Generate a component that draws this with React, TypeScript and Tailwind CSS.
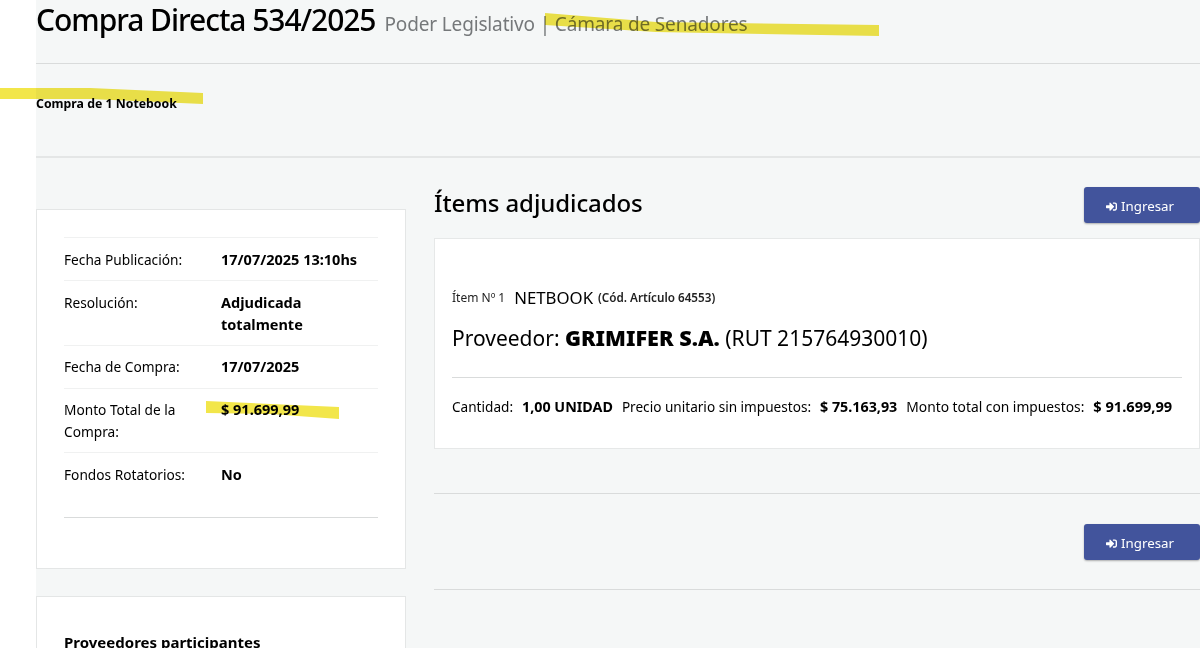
import React from 'react'
import { FaSignInAlt } from 'react-icons/fa'

const font = "font-['Noto_Sans',sans-serif]"

const rows = [
  { label: 'Fecha Publicación:', value: '17/07/2025 13:10hs', cls: 'h-[43px] pt-[11px]' },
  { label: 'Resolución:', value: 'Adjudicada totalmente', cls: 'h-[65px] pt-[11px]' },
  { label: 'Fecha de Compra:', value: '17/07/2025', cls: 'h-[43px] pt-[10px]' },
  { label: 'Monto Total de la Compra:', value: '$ 91.699,99', cls: 'h-[64px] pt-[10px]' },
  { label: 'Fondos Rotatorios:', value: 'No', cls: 'h-[65px] pt-[11px]' },
]

const IngresarButton = () => (
  <button className="flex h-9 w-[116px] items-center justify-center gap-1 rounded-[3px] bg-[#42549c] pr-[4px] pt-[3px] text-[13.3px] text-white shadow-[0_1px_2px_rgba(0,0,0,0.3)]">
    <FaSignInAlt className="h-[11px] w-[11px]" />
    Ingresar
  </button>
)

const Item = () => (
  <div className="h-[211px] border border-[#e6e8e8] bg-white px-[17px] pt-[47px] text-black">
    <div className="flex h-6 items-center">
      <span className="text-[12px] text-[#222]">Ítem Nº 1</span>
      <span className="ml-[9px] text-[16.8px]">NETBOOK</span>
      <span className="ml-[5px] text-[11.7px] font-semibold text-[#222]">(Cód. Artículo 64553)</span>
    </div>
    <div className="mt-[14px] text-[21px] leading-7">
      Proveedor: <b className="text-[21.6px] font-black">GRIMIFER S.A.</b> (RUT 215764930010)
    </div>
    <div className="mt-[25px] border-t border-[#d9dbdb] pt-[19px] text-[13.6px] leading-[18px]">
      <div className="flex items-baseline gap-[9px] whitespace-nowrap">
        <span>Cantidad:</span>
        <b className="text-[14.3px] font-bold">1,00 UNIDAD</b>
        <span>Precio unitario sin impuestos:</span>
        <b className="text-[14.3px] font-bold">$ 75.163,93</b>
        <span className="text-[13.8px]">Monto total con impuestos:</span>
        <b className="text-[14.6px] font-bold">$ 91.699,99</b>
      </div>
    </div>
  </div>
)

export default function App() {
  return (
    <div className={`relative flex h-[648px] overflow-hidden bg-white ${font}`}>
      <div className="w-9 shrink-0" />
      <main className="min-w-0 flex-1 bg-[#f5f7f7]">
        <header className="h-16 border-b border-[#d9dbdb]">
          <div className="flex items-baseline gap-[9px] leading-10">
            <h1 className="text-[30px] font-medium tracking-[-1.05px] text-black">Compra Directa 534/2025</h1>
            <span className="text-[19px] tracking-[-0.15px] text-[#75787a]">Poder Legislativo | Cámara de Senadores</span>
          </div>
        </header>
        <section className="h-[94px] border-b-2 border-[#e4e6e6] pt-[30px] text-[12.3px] font-bold leading-5 text-black">
          Compra de 1 Notebook
        </section>

        <div className="flex">
          <aside className="w-[370px] shrink-0 pt-[51px]">
            <div className="h-[360px] border border-[#e4e6e6] bg-white px-[27px] pt-[27px] text-[13.7px] leading-[22px] text-black">
              <div className="border-b-1 border-[#d9dbdb]">
                {rows.map((row) => (
                  <div key={row.label} className={`flex border-t border-[#f0f1f1] ${row.cls}`}>
                    <span className="w-[157px] shrink-0 pr-4">{row.label}</span>
                    <b className="w-[150px] text-[14.5px] font-bold leading-[21.5px]">{row.value}</b>
                  </div>
                ))}
              </div>
            </div>
            <div className="mt-[27px] h-[100px] border border-[#e4e6e6] bg-white px-[27px] pt-[33px] text-[15px] font-bold leading-6 text-black">
              Proveedores participantes
            </div>
          </aside>

          <div className="ml-[28px] min-w-0 flex-1 pt-[29px]">
            <div className="flex h-[51px] items-start justify-between">
              <h2 className="text-[24px] font-medium leading-8 tracking-[-0.1px] text-black">Ítems adjudicados</h2>
              <IngresarButton />
            </div>
            <Item />
            <div className="mt-11 flex h-[97px] justify-end border-y border-[#d9dbdb] pt-[30px]">
              <IngresarButton />
            </div>
          </div>
        </div>
      </main>

      {/* marker strokes drawn over the screenshot */}
      <svg className="pointer-events-none absolute inset-0 mix-blend-multiply" width="1200" height="648">
        <g fill="#f2e64a">
          <polygon points="545,13 656,22 879,25 879,36 656,32 545,25" />
          <polygon points="0,88 90,88 203,93 203,104 90,99 0,99" />
          <polygon points="206,401 339,407 339,419 270,414 206,413" />
        </g>
      </svg>
    </div>
  )
}
